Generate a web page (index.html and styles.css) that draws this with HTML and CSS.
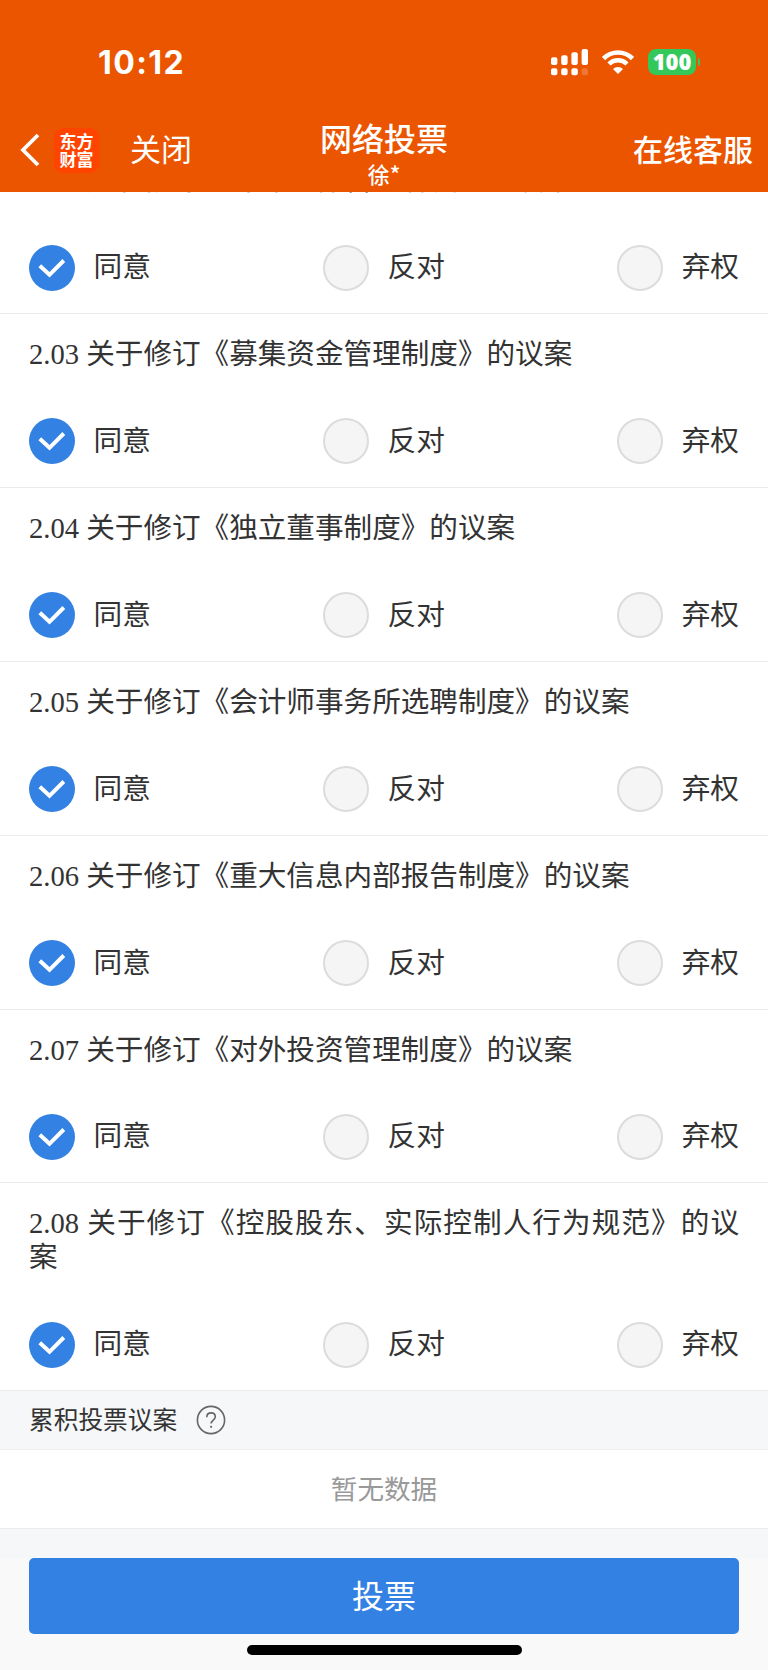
FILE: index.html
```html
<!DOCTYPE html>
<html lang="zh-CN">
<head>
    <meta charset="UTF-8">
    <meta name="viewport" content="width=device-width, initial-scale=1.0">
    <title>网络投票</title>
    <link rel="stylesheet" href="styles.css">
</head>
<body>
    <header>
        <div class="status">
            <span class="time">10:12</span>
            <div class="status-icons">
                <svg class="signal" width="38" height="27" viewBox="0 0 38 27">
                    <g fill="#fff">
                        <rect x="0" y="8.3" width="6.4" height="7.7" rx="2"/>
                        <rect x="10.2" y="6.3" width="6.4" height="9.7" rx="2"/>
                        <rect x="20.4" y="3.2" width="6.4" height="12.8" rx="2"/>
                        <rect x="30.6" y="0" width="6.4" height="16" rx="2"/>
                        <rect x="0" y="19.3" width="6.4" height="7" rx="2"/>
                        <rect x="10.2" y="19.3" width="6.4" height="7" rx="2"/>
                        <rect x="20.4" y="19.3" width="6.4" height="7" rx="2"/>
                        <rect x="30.6" y="19.3" width="6.4" height="7" rx="2" opacity="0.2"/>
                    </g>
                </svg>
                <svg class="wifi" width="32" height="24" viewBox="0 0 32 24">
                    <g fill="none" stroke="#fff" stroke-width="4.6">
                        <path d="M1.5 8.5a20.5 20.5 0 0 1 29 0"/>
                        <path d="M7 14a12.7 12.7 0 0 1 18 0"/>
                    </g>
                    <path fill="#fff" d="M16 24l-5-5a7 7 0 0 1 10 0z"/>
                </svg>
                <span class="battery">100</span>
                <span class="battery-cap"></span>
            </div>
        </div>
        <nav>
            <div class="nav-left">
                <svg class="back" width="20" height="34" viewBox="0 0 20 34">
                    <path d="M18 2L3 17l15 15" fill="none" stroke="#fff" stroke-width="3.8"/>
                </svg>
                <span class="logo"><span>东方</span><span>财富</span></span>
                <span class="close">关闭</span>
            </div>
            <div class="nav-title">
                <h1>网络投票</h1>
                <p>徐*</p>
            </div>
            <span class="service">在线客服</span>
        </nav>
    </header>

    <main>
        <div id="list"></div>
        <div class="section-head">
            <span class="label">累积投票议案</span>
            <svg width="30" height="30" viewBox="0 0 30 30">
                <circle cx="15" cy="15" r="13.6" fill="none" stroke="#666" stroke-width="1.6"/>
                <path d="M10.8 12.2c0-2.7 1.8-4.3 4.3-4.3s4.2 1.6 4.2 3.9c0 3.2-4.1 3.4-4.1 6.7" fill="none" stroke="#666" stroke-width="1.6"/>
                <circle cx="15.1" cy="21.8" r="1.1" fill="#666"/>
            </svg>
        </div>
        <div class="empty">暂无数据</div>
    </main>

    <footer>
        <button type="button">投票</button>
        <div class="home-bar"></div>
    </footer>

    <script src="script.js"></script>
</body>
</html>
```

FILE: styles.css
```css
body {
    margin: 0;
    height: 1670px;
    display: flex;
    flex-direction: column;
    overflow: hidden;
    background-color: #f6f7f9;
    color: #333;
    font-family: "Noto Sans CJK SC", sans-serif;
}

header {
    position: relative;
    z-index: 1;
    flex: none;
    height: 192px;
    background-color: #eb5500;
    color: white;
}

.status {
    display: flex;
    justify-content: space-between;
    box-sizing: border-box;
    height: 108px;
    padding: 42px 68px 0 98px;
}

.time {
    font-family: Inter, sans-serif;
    font-size: 32px;
    font-weight: 750;
    line-height: 42px;
    letter-spacing: 1.4px;
}

.status-icons {
    display: flex;
    height: 40px;
    align-items: center;
}

.wifi {
    margin-left: 13px;
}

.battery {
    width: 48px;
    height: 26px;
    margin-left: 14px;
    border-radius: 8px;
    background-color: #34c759;
    font-family: "Open Sans", sans-serif;
    font-size: 22px;
    font-weight: 800;
    line-height: 25px;
    text-align: center;
}

.battery-cap {
    width: 2px;
    height: 8px;
    margin-left: 2px;
    border-radius: 0 3px 3px 0;
    background-color: #34c759;
}

nav {
    display: grid;
    grid-template-columns: 1fr auto 1fr;
    height: 84px;
    padding: 0 15px;
}

.nav-left {
    display: flex;
    align-items: center;
    height: 84px;
    padding-left: 5px;
}

.logo {
    display: flex;
    flex-direction: column;
    align-items: center;
    justify-content: center;
    width: 45px;
    height: 45px;
    margin-left: 14px;
    border-radius: 9px;
    background-color: #ff4400;
    font-size: 17px;
    font-weight: 700;
    line-height: 18.5px;
}

.close {
    margin: -4px 0 0 31px;
    font-size: 31px;
    line-height: 46px;
}

.nav-title {
    text-align: center;
}

.nav-title h1 {
    margin: 7px 0 0;
    font-size: 32px;
    font-weight: 500;
    line-height: 44px;
}

.nav-title p {
    margin: 0;
    font-size: 22px;
    font-weight: 500;
    line-height: 29px;
}

.service {
    justify-self: end;
    font-size: 30px;
    font-weight: 500;
    line-height: 81px;
}

main {
    flex: none;
}

#list {
    margin-top: -51.7px;
}

.item {
    box-sizing: border-box;
    padding: 24px 29px 0;
    height: 173.87px;
    border-bottom: 1px solid #ebebeb;
    background-color: white;
}

.item.long {
    height: 207.4px;
}

.item h2 {
    margin: 0 0 46.3px;
    font-family: "Liberation Serif", "Noto Sans CJK SC", serif;
    font-size: 28.6px;
    font-weight: 400;
    line-height: 34px;
    text-align: justify;
}

.options {
    display: flex;
    justify-content: space-between;
}

.option {
    display: flex;
    align-items: center;
    gap: 18.5px;
    height: 46px;
    font-size: 28.7px;
}

.option .text {
    line-height: 42px;
    padding-bottom: 5px;
}

.radio {
    box-sizing: border-box;
    width: 46px;
    height: 46px;
    border: 2px solid #dcdcdc;
    border-radius: 50%;
    background-color: #f5f5f5;
}

.section-head {
    display: flex;
    align-items: center;
    gap: 19px;
    height: 58px;
    padding-left: 29px;
    font-size: 24.7px;
}

.section-head .label {
    padding-bottom: 4px;
}

.empty {
    height: 78px;
    border-top: 1px solid #eee;
    border-bottom: 1px solid #ebebee;
    background-color: white;
    color: #999;
    font-size: 26.6px;
    line-height: 76px;
    text-align: center;
}

footer {
    box-sizing: border-box;
    flex: 1;
    padding: 29px 29px 0;
    background: linear-gradient(#f6f7f9 29px, #f9f9f9 29px);
}

footer button {
    display: block;
    width: 100%;
    height: 76px;
    padding: 0 0 3px;
    border: none;
    border-radius: 5px;
    background-color: #3381e3;
    color: white;
    font-family: inherit;
    font-size: 32px;
}

.home-bar {
    width: 275px;
    height: 10px;
    margin: 11px auto 0;
    border-radius: 5px;
    background-color: black;
}
```

FILE: script.js
```js
const items = [
    "2.02 关于修订《对外担保管理制度》的议案",
    "2.03 关于修订《募集资金管理制度》的议案",
    "2.04 关于修订《独立董事制度》的议案",
    "2.05 关于修订《会计师事务所选聘制度》的议案",
    "2.06 关于修订《重大信息内部报告制度》的议案",
    "2.07 关于修订《对外投资管理制度》的议案",
    "2.08 关于修订《控股股东、实际控制人行为规范》的议案"
];

const checked = `<svg width="46" height="46" viewBox="0 0 46 46">
    <circle cx="23" cy="23" r="23" fill="#3381e3"/>
    <path d="M10.8 20.8l9.7 9L34.8 15.5" fill="none" stroke="#fff" stroke-width="4"/>
</svg>`;

document.getElementById("list").innerHTML = items.map(title => `
    <div class="item ${title.length > 25 ? "long" : ""}">
        <h2>${title}</h2>
        <div class="options">
            <label class="option">${checked}<span class="text">同意</span></label>
            <label class="option"><span class="radio"></span><span class="text">反对</span></label>
            <label class="option"><span class="radio"></span><span class="text">弃权</span></label>
        </div>
    </div>`).join("");
```
